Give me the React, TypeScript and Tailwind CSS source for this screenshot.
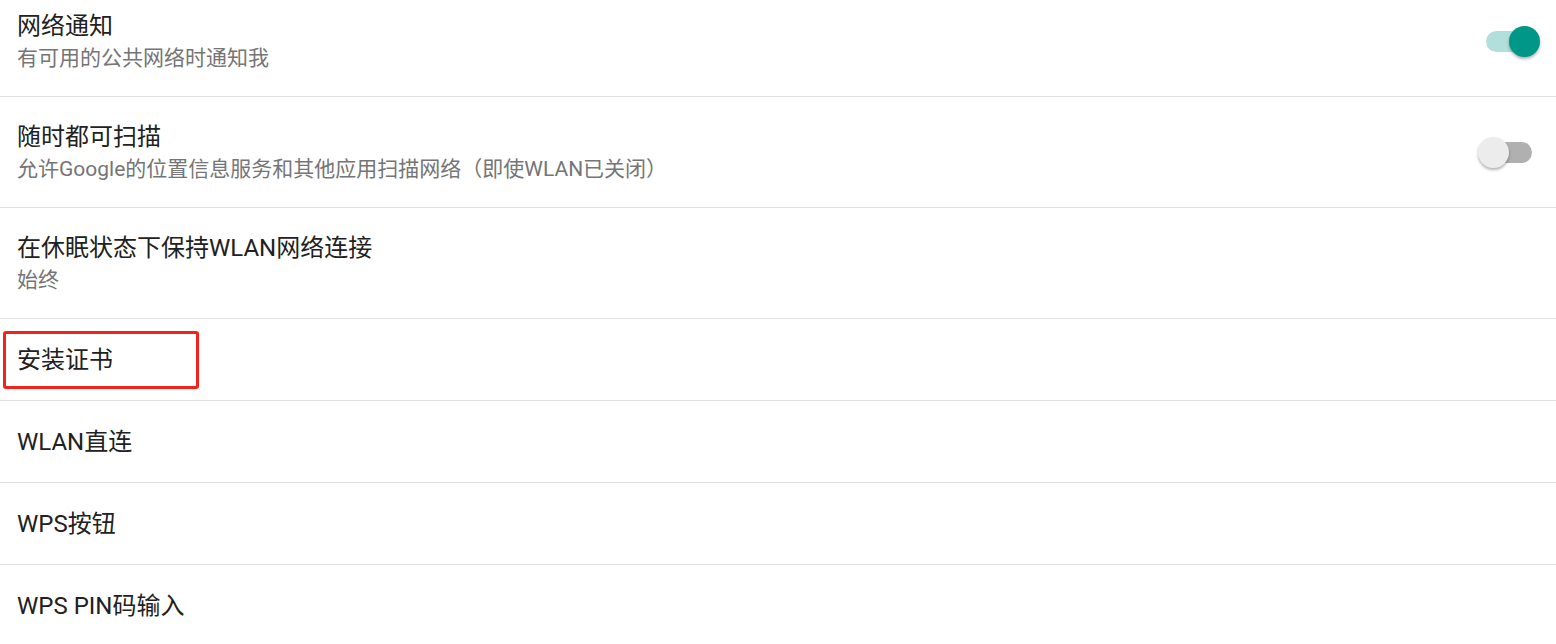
import React from 'react';

interface Item {
  title: string;
  summary?: string;
  toggle?: boolean;
  checked?: boolean;
  highlight?: boolean;
}

const items: Item[] = [
  { title: '网络通知', summary: '有可用的公共网络时通知我', toggle: true, checked: true },
  { title: '随时都可扫描', summary: '允许Google的位置信息服务和其他应用扫描网络（即使WLAN已关闭）', toggle: true, checked: false },
  { title: '在休眠状态下保持WLAN网络连接', summary: '始终' },
  { title: '安装证书', highlight: true },
  { title: 'WLAN直连' },
  { title: 'WPS按钮' },
  { title: 'WPS PIN码输入' },
];

function Switch({ checked }: { checked: boolean }) {
  if (checked) {
    return (
      <div className="relative w-[54px] h-[31px] mr-[16px] flex items-center">
        <div className="w-[49px] h-[21px] rounded-full bg-[#b2dfdb]" />
        <div className="absolute right-0 top-0 w-[31px] h-[31px] rounded-full bg-[#009688] shadow-[0_2px_3px_rgba(0,0,0,0.3)]" />
      </div>
    );
  }
  return (
    <div className="relative w-[54px] h-[31px] mr-[24px] flex items-center justify-end">
      <div className="w-[49px] h-[21px] rounded-full bg-[#b0b0b0]" />
      <div className="absolute left-0 top-0 w-[31px] h-[31px] rounded-full bg-[#ececec] shadow-[0_2px_3px_rgba(0,0,0,0.3)]" />
    </div>
  );
}

export default function App() {
  return (
    <div
      className="bg-white w-[1556px] h-[644px] overflow-hidden"
      style={{ fontFamily: 'Roboto, "Noto Sans CJK SC", sans-serif' }}
    >
      <div className="-mt-[14px]">
        {items.map((item, i) => (
          <div key={i} className="border-b border-[#e0e0e0]">
            <div
              className={`relative flex items-center justify-between pl-[17px] ${
                item.summary ? 'h-[110px]' : 'h-[81px]'
              }`}
            >
              <div className="flex flex-col">
                <div className="text-[24px] leading-[34px] text-[#212121]">{item.title}</div>
                {item.summary && (
                  <div className="text-[21px] leading-[30px] text-[#757575]">{item.summary}</div>
                )}
              </div>
              {item.toggle && <Switch checked={!!item.checked} />}
              {item.highlight && (
                <div className="absolute left-[3px] top-[12px] w-[196px] h-[58px] border-[3px] border-[#f5221b] rounded-[3px]" />
              )}
            </div>
          </div>
        ))}
      </div>
    </div>
  );
}
